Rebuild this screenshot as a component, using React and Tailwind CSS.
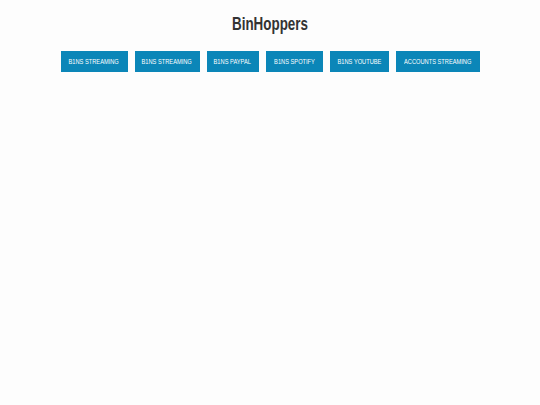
import React from "react";

const buttons = [
  { label: "B1NS STREAMING", w: "w-[67px]" },
  { label: "B1NS STREAMING", w: "w-[65px]" },
  { label: "B1NS PAYPAL", w: "w-[52px]" },
  { label: "B1NS SPOTIFY", w: "w-[57px]" },
  { label: "B1NS YOUTUBE", w: "w-[59px]" },
  { label: "ACCOUNTS STREAMING", w: "w-[84px]" },
];

export default function App() {
  return (
    <div className="w-[540px] h-[405px] bg-[#fdfdfd] flex flex-col items-center" style={{ fontFamily: '"Liberation Sans", Arial, sans-serif' }}>
      <h1 className="mt-[13px] h-[22px] leading-[22px] text-[18px] font-bold text-[#333333] flex justify-center w-[200px]">
        <span className="inline-block scale-x-[0.745] whitespace-nowrap">BinHoppers</span>
      </h1>
      <div className="mt-[16px] flex gap-[7px]">
        {buttons.map((b, i) => (
          <div
            key={i}
            className={`${b.w} h-[21px] bg-[#0b86b8] flex items-center justify-center overflow-visible`}
          >
            <span className="inline-block whitespace-nowrap text-[7.4px] leading-none text-white scale-x-[0.77]">
              {b.label}
            </span>
          </div>
        ))}
      </div>
    </div>
  );
}
